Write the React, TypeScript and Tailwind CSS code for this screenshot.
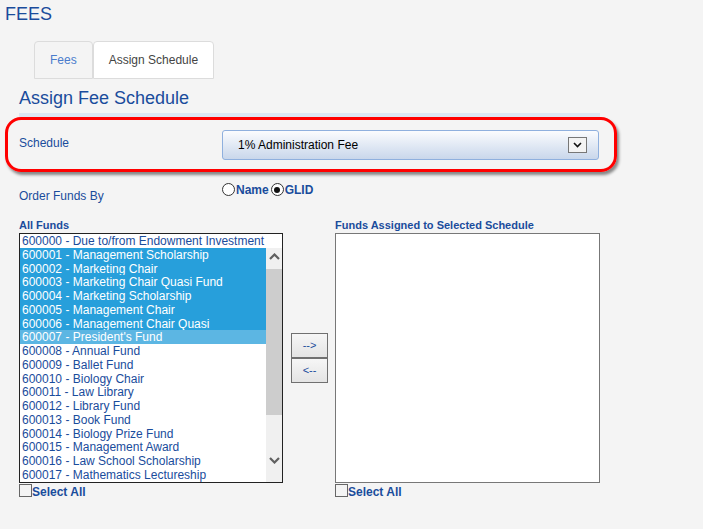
import React from 'react';

const funds = [
  '600000 - Due to/from Endowment Investment',
  '600001 - Management Scholarship',
  '600002 - Marketing Chair',
  '600003 - Marketing Chair Quasi Fund',
  '600004 - Marketing Scholarship',
  '600005 - Management Chair',
  '600006 - Management Chair Quasi',
  "600007 - President's Fund",
  '600008 - Annual Fund',
  '600009 - Ballet Fund',
  '600010 - Biology Chair',
  '600011 - Law Library',
  '600012 - Library Fund',
  '600013 - Book Fund',
  '600014 - Biology Prize Fund',
  '600015 - Management Award',
  '600016 - Law School Scholarship',
  '600017 - Mathematics Lectureship',
];

const selected = [1, 2, 3, 4, 5, 6];
const focused = 7;

function Chevron({ up }: { up?: boolean }) {
  return (
    <svg width="11" height="7" viewBox="0 0 11 7">
      <polyline
        points={up ? '1,6 5.5,1.5 10,6' : '1,1 5.5,5.5 10,1'}
        fill="none"
        stroke="#606060"
        strokeWidth="2.2"
      />
    </svg>
  );
}

function Radio({ checked }: { checked?: boolean }) {
  return (
    <span className="w-[13px] h-[13px] rounded-full border border-[#333] bg-white flex items-center justify-center">
      {checked && <span className="w-[6px] h-[6px] rounded-full bg-[#111]" />}
    </span>
  );
}

function SelectAll() {
  return (
    <div className="mt-[1px] flex items-center h-[13px]">
      <span className="w-[13px] h-[13px] border border-[#666] bg-[#f4f4f4]" />
      <span className="text-[12px] font-bold text-[#1a4c9c] leading-[13px] mt-[4px]">Select All</span>
    </div>
  );
}

export default function App() {
  return (
    <div className="relative w-full min-h-[529px] bg-[#f4f4f4] font-['Liberation_Sans',Arial,sans-serif] overflow-hidden">
      {/* Title */}
      <div className="pl-[5px] pt-[4px] text-[18px] leading-[21px] text-[#1a4c9c]">FEES</div>

      {/* Tabs */}
      <div className="mt-[16px] pl-[34px] flex">
        <div className="h-[38px] px-[15px] flex items-center border border-[#dcdcdc] rounded-t-[4px] bg-[#f4f4f4] text-[12px] text-[#4a7ccc]">
          Fees
        </div>
        <div className="h-[38px] px-[15px] flex items-center border border-[#dcdcdc] rounded-t-[4px] bg-white text-[12px] text-[#444]">
          Assign Schedule
        </div>
      </div>

      {/* Heading */}
      <div className="mt-[9px] pl-[19px] text-[18px] leading-[21px] text-[#1a4c9c]">Assign Fee Schedule</div>
      <div className="mt-[4px] ml-[19px] w-[581px] h-[4px] bg-[#dce6f2]" />

      {/* Schedule row */}
      <div className="mt-[13px] pl-[19px] flex items-start">
        <div className="w-[203px] pt-[6px] text-[12px] leading-[14px] text-[#1a4c9c]">Schedule</div>
        <div className="w-[377px] h-[30px] rounded-[3px] border border-[#8fb0de] bg-gradient-to-b from-[#fbfcfe] to-[#c9d7eb] flex items-center justify-between pl-[15px] pr-[11px]">
          <span className="text-[12px] text-black">1% Administration Fee</span>
          <span className="w-[19px] h-[16px] border border-[#777] bg-[#f3f3f3] flex items-center justify-center">
            <svg width="9" height="6" viewBox="0 0 9 6">
              <polyline points="1,1 4.5,4.5 8,1" fill="none" stroke="#111" strokeWidth="1.6" />
            </svg>
          </span>
        </div>
      </div>

      {/* Order row */}
      <div className="mt-[22px] pl-[19px] flex items-start">
        <div className="w-[203px] pt-[7px] text-[12px] leading-[14px] text-[#1a4c9c]">Order Funds By</div>
        <div className="flex items-center h-[15px] text-[12px] font-bold text-[#1a4c9c]">
          <Radio />
          <span className="ml-[1px]">Name</span>
          <span className="ml-[2px]" />
          <Radio checked />
          <span className="ml-[1px]">GLID</span>
        </div>
      </div>

      {/* Lists */}
      <div className="mt-[16px] pl-[19px] flex items-start">
        <div className="w-[264px] flex flex-col">
          <div className="text-[11px] font-bold leading-[13px] text-[#1a4c9c]">All Funds</div>
          <div className="mt-[1px] h-[250px] border border-[#222] bg-white flex">
            <div className="flex-1 flex flex-col">
              {funds.map((f, i) => {
                const isSel = selected.includes(i);
                const isFocus = i === focused;
                return (
                  <div
                    key={f}
                    className={
                      'h-[13.75px] leading-[14.5px] text-[12px] pl-[2px] whitespace-nowrap ' +
                      (isSel
                        ? 'bg-[#279fdb] text-white'
                        : isFocus
                        ? 'bg-[#5cb6e3] text-white'
                        : 'text-[#1a4c9c]')
                    }
                  >
                    {f}
                  </div>
                );
              })}
            </div>
            <div className="w-[16px] flex flex-col">
              <div className="h-[13.75px] bg-white" />
              <div className="flex-1 bg-[#f0f0f0] flex flex-col">
                <div className="h-[17px] flex items-center justify-center">
                  <Chevron up />
                </div>
                <div className="mt-[4px] h-[146px] bg-[#cdcdcd]" />
                <div className="flex-1" />
                <div className="h-[17px] flex items-center justify-center">
                  <Chevron />
                </div>
                <div className="h-[13px]" />
              </div>
            </div>
          </div>
          <SelectAll />
        </div>

        <div className="ml-[8px] mt-[114px] flex flex-col">
          <button className="w-[37px] h-[25px] border border-[#707070] bg-gradient-to-b from-[#f6f6f6] to-[#e4e4e4] text-[11px] text-[#1a4c9c] leading-none">
            --&gt;
          </button>
          <button className="w-[37px] h-[25px] border border-[#707070] bg-gradient-to-b from-[#f6f6f6] to-[#e4e4e4] text-[11px] text-[#1a4c9c] leading-none">
            &lt;--
          </button>
        </div>

        <div className="ml-[7px] w-[265px] flex flex-col">
          <div className="text-[11px] font-bold leading-[13px] text-[#1a4c9c]">Funds Assigned to Selected Schedule</div>
          <div className="mt-[1px] h-[250px] border border-[#777] bg-white" />
          <SelectAll />
        </div>
      </div>

      {/* Red annotation highlight */}
      <div className="absolute left-[5px] top-[117px] w-[612px] h-[55px] rounded-[16px] border-[3px] border-[#ff0000] shadow-[2px_3px_3px_rgba(0,0,0,0.45)] pointer-events-none" />
    </div>
  );
}
